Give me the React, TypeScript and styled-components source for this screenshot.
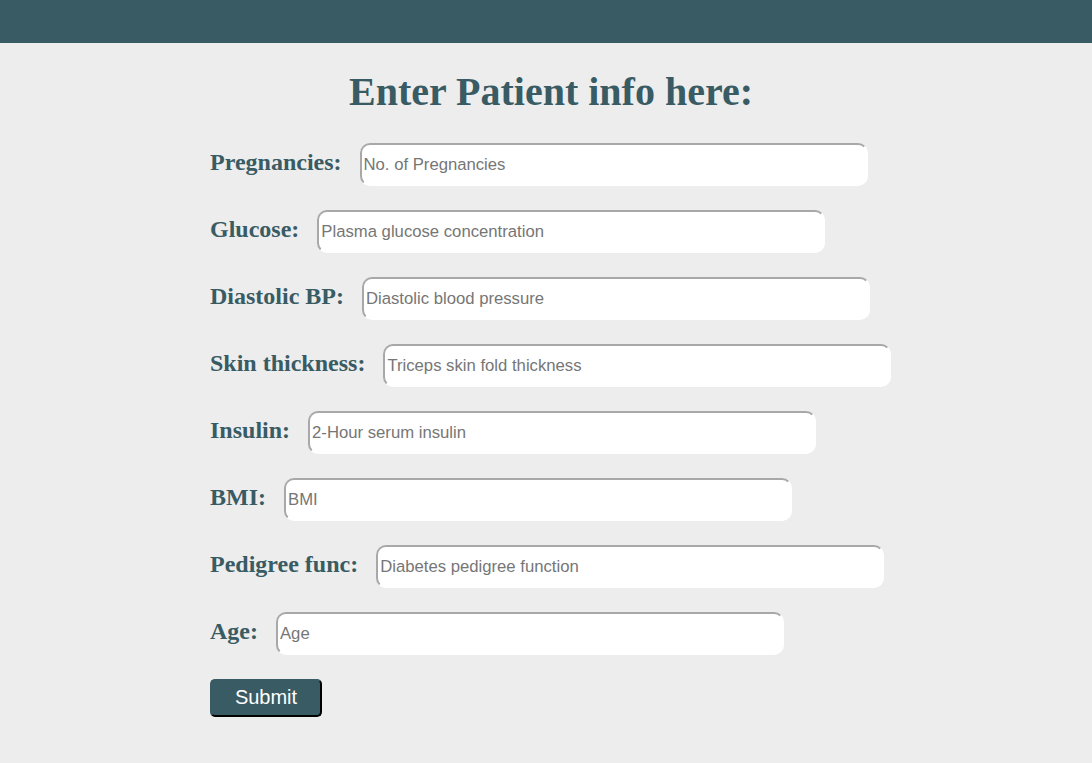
import React from "react";
import styled, { createGlobalStyle } from "styled-components";

const Global = createGlobalStyle`
  html, body { margin: 0; padding: 0; background: #ededed; }
  body { font-family: "Liberation Serif", "Times New Roman", serif; }
`;

const Header = styled.header`
  height: 43px;
  background: #395b64;
`;

const Main = styled.main`
  padding: 0 0 0 210px;
`;

const Title = styled.h1`
  margin: 25px 0 27px -200px;
  text-align: center;
  font-family: "Liberation Serif", serif;
  font-weight: bold;
  font-size: 40px;
  line-height: 48px;
  color: #395b64;
`;

const Form = styled.form`
  display: flex;
  flex-direction: column;
  gap: 24px;
`;

const Row = styled.div`
  display: flex;
  align-items: center;
`;

const Label = styled.label`
  flex-shrink: 0;
  white-space: nowrap;
  font-family: "Liberation Serif", serif;
  font-weight: bold;
  font-size: 24px;
  color: #395b64;
  margin-right: 18px;
  position: relative;
  top: -2px;
`;

const Input = styled.input`
  flex-shrink: 0;
  box-sizing: border-box;
  width: 508px;
  height: 43px;
  padding: 0 2px;
  border-width: 2px;
  border-style: solid;
  border-color: #a8a8a8 #ffffff #ffffff #a8a8a8;
  border-radius: 10px;
  background: #fff;
  font-family: "Liberation Sans", Arial, sans-serif;
  font-size: 16.7px;
  color: #333;
  outline: none;
  &::placeholder { color: #767676; }
`;

const Submit = styled.button`
  box-sizing: border-box;
  align-self: flex-start;
  width: 112px;
  height: 38px;
  padding: 0 0 2px;
  background: #395b64;
  color: #fff;
  font-family: "Liberation Sans", Arial, sans-serif;
  font-size: 20px;
  border-width: 2px;
  border-style: solid;
  border-color: #395b64 #000 #000 #395b64;
  border-radius: 5px;
  cursor: pointer;
`;

const fields: [string, string][] = [
  ["Pregnancies:", "No. of Pregnancies"],
  ["Glucose:", "Plasma glucose concentration"],
  ["Diastolic BP:", "Diastolic blood pressure"],
  ["Skin thickness:", "Triceps skin fold thickness"],
  ["Insulin:", "2-Hour serum insulin"],
  ["BMI:", "BMI"],
  ["Pedigree func:", "Diabetes pedigree function"],
  ["Age:", "Age"],
];

export default function App() {
  return (
    <>
      <Global />
      <Header />
      <Main>
        <Title>Enter Patient info here:</Title>
        <Form onSubmit={(e) => e.preventDefault()}>
          {fields.map(([l, p]) => (
            <Row key={l}>
              <Label>{l}</Label>
              <Input type="text" placeholder={p} />
            </Row>
          ))}
          <Submit type="submit">Submit</Submit>
        </Form>
      </Main>
    </>
  );
}
